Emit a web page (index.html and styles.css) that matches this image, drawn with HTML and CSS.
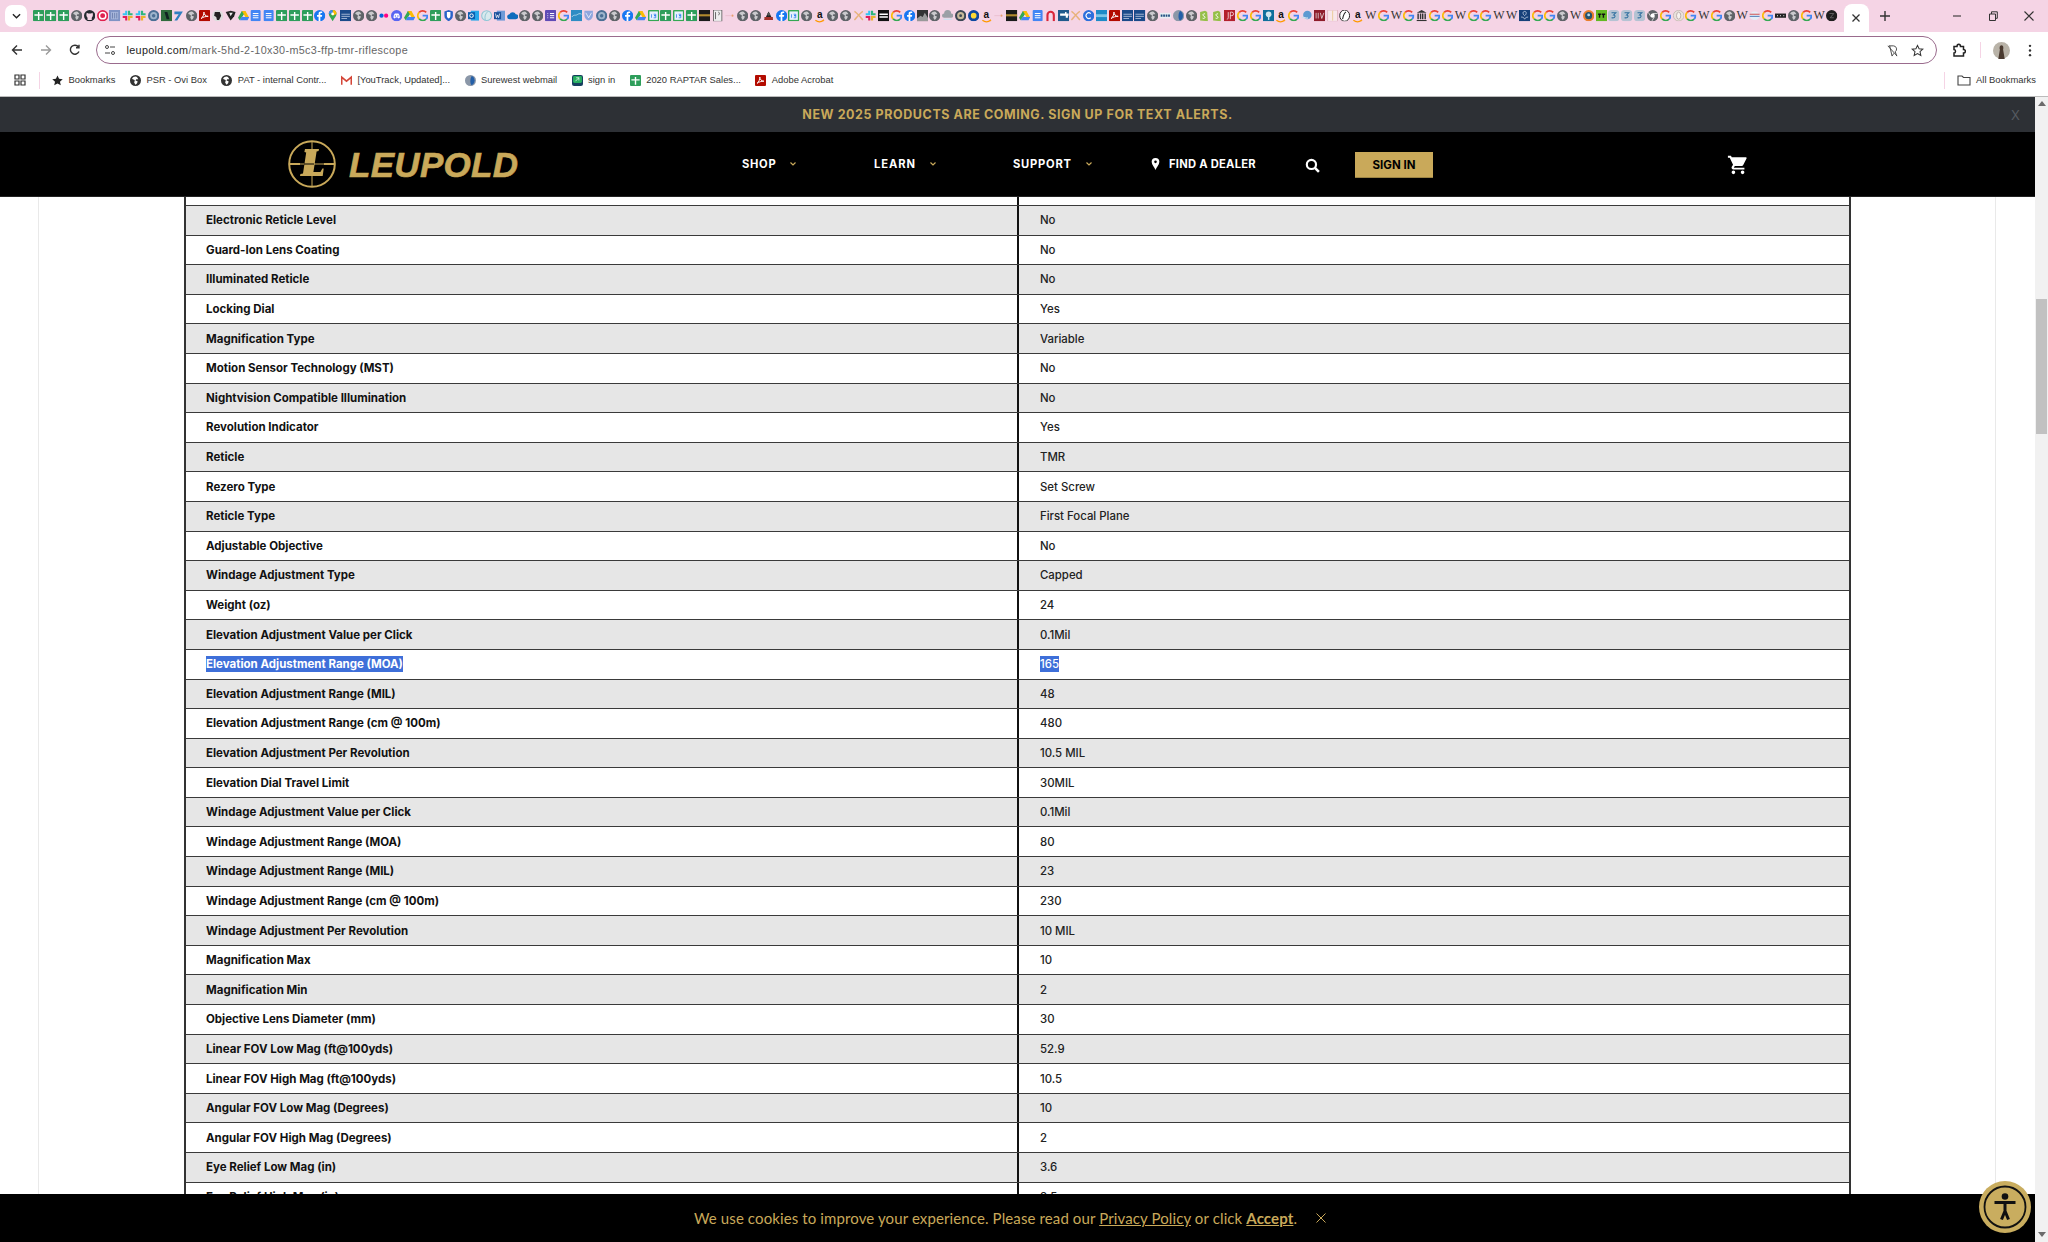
FILE: index.html
```html
<!DOCTYPE html>
<html lang="en">
<head>
<meta charset="utf-8">
<title>Leupold Mark 5HD 2-10x30</title>
<link rel="stylesheet" href="styles.css">
</head>
<body>
<svg class="defs" aria-hidden="true">
<symbol id="s" viewBox="0 0 16 16"><rect width="16" height="16" rx="1.5" fill="#2e9e5b"/><path d="M7 3h2v3h5v2H9v6H7V8H2V6h5z" fill="#fff"/></symbol>
<symbol id="g" viewBox="0 0 16 16"><circle cx="8" cy="8" r="8" fill="#5f6368"/><path d="M8 2C6 2 4 3 3 5c1 2 3 1 4 3l-1 3 2 3c2-1 3-3 3-5L8 8l1-2h3c-1-2-2-4-4-4z" fill="#c9c9cc"/></symbol>
<symbol id="gh" viewBox="0 0 16 16"><circle cx="8" cy="8" r="8" fill="#24292f"/><path d="M5 14v-3C3 9 3 6 4 4l2 1h4l2-1c1 2 1 5-1 7v3z" fill="#f5d4e5"/></symbol>
<symbol id="yt" viewBox="0 0 16 16"><circle cx="8" cy="8" r="8" fill="#e0224e"/><circle cx="8" cy="8" r="4.5" fill="none" stroke="#fff" stroke-width="2"/></symbol>
<symbol id="ms" viewBox="0 0 16 16"><rect width="16" height="16" fill="#7f93c4"/><path d="M3 3h10v10H3z" fill="#a9b8dc"/><path d="M5 4v8M8 4v8M11 4v8" stroke="#5c6f9f"/></symbol>
<symbol id="sl" viewBox="0 0 16 16"><path d="M6 1v5H1" fill="none" stroke="#36c5f0" stroke-width="3"/><path d="M15 6h-5V1" fill="none" stroke="#2eb67d" stroke-width="3"/><path d="M10 15v-5h5" fill="none" stroke="#ecb22e" stroke-width="3"/><path d="M1 10h5v5" fill="none" stroke="#e01e5a" stroke-width="3"/></symbol>
<symbol id="ro" viewBox="0 0 16 16"><circle cx="8" cy="8" r="8" fill="#4b6f95"/><circle cx="8" cy="8" r="5" fill="#9db4cc"/><circle cx="8" cy="8" r="2.5" fill="#4b6f95"/></symbol>
<symbol id="gd" viewBox="0 0 16 16"><rect width="16" height="16" fill="#2f6b3c"/><path d="M5 3h4l3 10H8z" fill="#122"/></symbol>
<symbol id="bs" viewBox="0 0 16 16"><path d="M2 2h12L6 15H2l6-9H2z" fill="#2f7fc1"/></symbol>
<symbol id="pdf" viewBox="0 0 16 16"><rect width="16" height="16" rx="1.5" fill="#b30b00"/><path d="M3 12c3-2 4-6 4-9 0 3 2 6 6 6-4 0-7 1-10 3z" fill="none" stroke="#fff" stroke-width="1.4"/></symbol>
<symbol id="dk" viewBox="0 0 16 16"><circle cx="8" cy="8" r="8" fill="#ddd"/><path d="M4 3h7l2 5-3 6H7l-1-4-3-2z" fill="#222"/></symbol>
<symbol id="sh" viewBox="0 0 16 16"><path d="M1 3l7-2 7 2-2 6-5 6-3-5z" fill="#222"/><path d="M6 4h5L8 9z" fill="#eee"/></symbol>
<symbol id="dr" viewBox="0 0 16 16"><path d="M5.5 1.5h5L8 6 5 11z" fill="#0f9d58"/><path d="M5.5 1.500L0 11l2.500 3.500L8 6z" fill="#34a853"/><path d="M10.500 1.500L16 11h-5L5.500 1.500z" fill="#fbbc04"/><path d="M2.500 14.500L5 10h11l-2.500 4.500z" fill="#4285f4"/></symbol>
<symbol id="do" viewBox="0 0 16 16"><rect x="1" width="14" height="16" rx="1.500" fill="#4285f4"/><path d="M4 5h8M4 8h8M4 11h8" stroke="#fff" stroke-width="1.400"/></symbol>
<symbol id="fb" viewBox="0 0 16 16"><circle cx="8" cy="8" r="8" fill="#1877f2"/><path d="M9 16V9.500h2.200l.4-2.500H9V5.500c0-.8.4-1.300 1.400-1.300h1.200V2.100C11 2 10.300 2 9.700 2 7.700 2 6.500 3.200 6.500 5.200V7H4.300v2.500h2.200V16z" fill="#fff"/></symbol>
<symbol id="mp" viewBox="0 0 16 16"><path d="M8 0a5.500 5.500 0 0 1 5.500 5.500C13.500 9 9.500 12 8 16 6.500 12 2.500 9 2.500 5.500A5.500 5.500 0 0 1 8 0z" fill="#34a853"/><path d="M8 0a5.500 5.500 0 0 1 5.500 5.500L8 8z" fill="#fbbc04"/><path d="M8 0a5.500 5.500 0 0 0-5.500 5.500L8 4z" fill="#4285f4"/><circle cx="8" cy="5.500" r="2" fill="#fff"/></symbol>
<symbol id="nv" viewBox="0 0 16 16"><rect width="16" height="16" fill="#1b4a8a"/><path d="M2 6h12M2 9h12M2 12h8" stroke="#d5e0ef"/></symbol>
<symbol id="dt" viewBox="0 0 16 16"><circle cx="5" cy="8" r="3" fill="#0063dc"/><circle cx="11.500" cy="8" r="3" fill="#ff0084"/></symbol>
<symbol id="dc" viewBox="0 0 16 16"><circle cx="8" cy="8" r="8" fill="#5865f2"/><path d="M3.500 11c0-3 1-5 2-6h5c1 1 2 3 2 6l-2 1-1-1.500h-3L5.500 12z" fill="#fff"/><circle cx="6.200" cy="8.500" r="1" fill="#5865f2"/><circle cx="9.800" cy="8.500" r="1" fill="#5865f2"/></symbol>
<symbol id="G" viewBox="0 0 16 16"><path d="M13 3.500A7 7 0 0 0 3 3.300" fill="none" stroke="#ea4335" stroke-width="2.600"/><path d="M3 3.300a7 7 0 0 0 0 9.400" fill="none" stroke="#fbbc05" stroke-width="2.600"/><path d="M3 12.700a7 7 0 0 0 9.800.2" fill="none" stroke="#34a853" stroke-width="2.600"/><path d="M12.800 12.900A7 7 0 0 0 15 8H8" fill="none" stroke="#4285f4" stroke-width="2.600"/></symbol>
<symbol id="sw" viewBox="0 0 16 16"><path d="M2 2l6-2 6 2v6c0 4-3 6-6 8-3-2-6-4-6-8z" fill="#2a62c9"/><path d="M5.500 3h5v5c0 2-1 3-2.500 4-1.500-1-2.500-2-2.500-4z" fill="#fff"/></symbol>
<symbol id="ol" viewBox="0 0 16 16"><rect x="4" y="1" width="12" height="14" fill="#28a8ea"/><rect y="3" width="10" height="10" fill="#0a5fb0"/><circle cx="5" cy="8" r="2.500" fill="none" stroke="#fff" stroke-width="1.400"/></symbol>
<symbol id="lb" viewBox="0 0 16 16"><circle cx="8" cy="8" r="7" fill="#d8e9ee" stroke="#8fc6d6" stroke-width="1.500"/><path d="M10 2C6 5 5 9 6 14" stroke="#77b7c9" fill="none"/></symbol>
<symbol id="wd" viewBox="0 0 16 16"><rect x="4" y="1" width="12" height="14" fill="#6f9ad8"/><rect y="3" width="10" height="10" fill="#1b4f9c"/><path d="M2 5l1.500 6L5 7l1.500 4L8 5" fill="none" stroke="#fff"/></symbol>
<symbol id="cl" viewBox="0 0 16 16"><path d="M4 13a3.500 3.500 0 0 1-.5-7A5 5 0 0 1 12.500 6a3.500 3.500 0 0 1 0 7z" fill="#0f6cbd"/></symbol>
<symbol id="fm" viewBox="0 0 16 16"><rect width="16" height="16" rx="1.500" fill="#5f4bb6"/><path d="M7 5h6M7 8h6M7 11h6M3.500 5h1M3.500 8h1M3.500 11h1" stroke="#fff" stroke-width="1.400"/></symbol>
<symbol id="bm" viewBox="0 0 16 16"><rect width="16" height="16" fill="#2d8cc4"/><path d="M1 10c3-4 5-2 7-3s4-3 7-1" stroke="#d7ecf6" fill="none"/></symbol>
<symbol id="sb" viewBox="0 0 16 16"><path d="M2 1h12v7c0 3-3 6-6 7-3-1-6-4-6-7z" fill="#8fa6de"/><path d="M4 4l4 7 4-7" stroke="#fff" fill="none"/></symbol>
<symbol id="cal" viewBox="0 0 16 16"><rect width="16" height="16" rx="1.500" fill="#34a853"/><rect x="2" y="2" width="12" height="12" fill="#e8f0fe"/><path d="M5 6v5M8 6h3v2H8.500h2.500v3H8" stroke="#1a73e8" fill="none"/></symbol>
<symbol id="bgd" viewBox="0 0 16 16"><rect width="16" height="16" fill="#1a1a1a"/><rect y="6" width="16" height="3" fill="#b08a2e"/></symbol>
<symbol id="dw" viewBox="0 0 16 16"><rect x="2" width="12" height="16" fill="#eee" stroke="#444"/><path d="M5 3v10M9 3c2 0 2 4 0 4" stroke="#333" fill="none"/></symbol>
<symbol id="ti" viewBox="0 0 16 16"><path d="M2 8h8" stroke="#e6b8c8"/><circle cx="12" cy="8" r="1.500" fill="#e8a070"/></symbol>
<symbol id="rb" viewBox="0 0 16 16"><path d="M2 14l6-12 6 12z" fill="#222"/><path d="M2 10h12v4H2z" fill="#a3302a"/><circle cx="8" cy="6" r="2" fill="#555"/></symbol>
<symbol id="xo" viewBox="0 0 16 16"><path d="M2 2c4 2 8 8 12 12M14 2C10 4 6 10 2 14" stroke="#e7b27a" stroke-width="2" fill="none"/></symbol>
<symbol id="eq" viewBox="0 0 16 16"><rect width="16" height="16" fill="#111"/><path d="M2 5h12v2H2zM2 9h12v2H2z" fill="#fff"/></symbol>
<symbol id="di" viewBox="0 0 16 16"><rect width="16" height="16" fill="#333"/><path d="M0 12l5-4 3 2 3-6 5 8v4H0z" fill="#999"/></symbol>
<symbol id="cg" viewBox="0 0 16 16"><path d="M3 11a3 3 0 0 1 0-6 5 5 0 0 1 10 0 3 3 0 0 1 0 6z" fill="#9aa0a6"/><path d="M2 13h12" stroke="#cfe0ee" stroke-width="2"/></symbol>
<symbol id="se" viewBox="0 0 16 16"><circle cx="8" cy="8" r="8" fill="#3b4654"/><circle cx="8" cy="8" r="5" fill="#c7b999"/><circle cx="8" cy="8" r="2" fill="#3b4654"/></symbol>
<symbol id="yb" viewBox="0 0 16 16"><circle cx="8" cy="8" r="8" fill="#0d47a1"/><circle cx="8" cy="8" r="4" fill="#fdd835"/></symbol>
<symbol id="ar" viewBox="0 0 16 16"><path d="M2 16V7a6 6 0 0 1 12 0v9h-3V7a3 3 0 0 0-6 0v9z" fill="#d9263a"/></symbol>
<symbol id="fa" viewBox="0 0 16 16"><rect width="16" height="16" fill="#1f5a8c"/><path d="M3 5h7V3h2v2h3v3H3zM11 8h3v3h-3z" fill="#fff"/></symbol>
<symbol id="bc" viewBox="0 0 16 16"><circle cx="8" cy="8" r="8" fill="#2c6fdc"/><path d="M11 5a4 4 0 1 0 0 6" fill="none" stroke="#fff" stroke-width="1.500"/></symbol>
<symbol id="ac" viewBox="0 0 16 16"><rect width="16" height="16" fill="#1d8ac7"/><rect y="6" width="16" height="4" fill="#7cc4e6"/></symbol>
<symbol id="cs" viewBox="0 0 16 16"><rect y="4" width="16" height="8" fill="#e9edf2"/><path d="M1 8h14" stroke="#1f4f80" stroke-width="3" stroke-dasharray="2.500 1"/></symbol>
<symbol id="br" viewBox="0 0 16 16"><circle cx="8" cy="8" r="8" fill="#8b97a8"/><path d="M10 1a8 8 0 0 1 0 14C7 13 7 5 10 1z" fill="#245fa8"/></symbol>
<symbol id="sp" viewBox="0 0 16 16"><path d="M3 3l7-2 3 2 1 13-11-1z" fill="#95bf47"/><path d="M10 5.500C8 5 7 6 7 7c0 2 3 1.500 3 3.500 0 1-2 2-3.500 1" fill="none" stroke="#fff" stroke-width="1.300"/></symbol>
<symbol id="jp" viewBox="0 0 16 16"><rect width="16" height="16" fill="#b3202c"/><path d="M6 3v8c0 1.500-1 2-2 2M9 13V3h2a2.500 2.500 0 0 1 0 5H9" fill="none" stroke="#fff"/></symbol>
<symbol id="bt" viewBox="0 0 16 16"><rect width="16" height="16" fill="#0f6f9c"/><circle cx="8" cy="6" r="4" fill="#cfe6ef"/><rect x="7" y="9" width="2" height="5" fill="#cfe6ef"/></symbol>
<symbol id="bb" viewBox="0 0 16 16"><circle cx="9" cy="7" r="6" fill="#5d9ad1"/><path d="M1 11c3-2 5 2 9 0" stroke="#cfe0ee" stroke-width="2" fill="none"/></symbol>
<symbol id="bv" viewBox="0 0 16 16"><rect width="16" height="16" fill="#8e1c2a"/><path d="M3 4v8M6 4v8M9 4l2 8 3-8" stroke="#eee" fill="none"/></symbol>
<symbol id="pk" viewBox="0 0 16 16"><rect x="1" width="14" height="16" fill="#f8e6ea" stroke="#dba8b6"/><path d="M8 1v14" stroke="#e6c27a"/></symbol>
<symbol id="dv" viewBox="0 0 16 16"><ellipse cx="8" cy="8" rx="7" ry="8" fill="#fff" stroke="#222" stroke-width="1.400"/><path d="M10 3C7 4 6 9 5 13" stroke="#222" stroke-width="1.500" fill="none"/></symbol>
<symbol id="mu" viewBox="0 0 16 16"><path d="M8 0l7 4H1zM2 5h2v8H2zM5.500 5h2v8h-2zM8.500 5h2v8h-2zM12 5h2v8h-2zM1 14h14v2H1z" fill="#333"/></symbol>
<symbol id="nm" viewBox="0 0 16 16"><rect width="16" height="16" fill="#16417a"/><path d="M8 2c3 0 3 4 0 6-3-2-3-6 0-6zM3 10c3 0 4 1 5 3 1-2 2-3 5-3" stroke="#dbe5f2" fill="none"/></symbol>
<symbol id="oc" viewBox="0 0 16 16"><circle cx="8" cy="8" r="8" fill="#e97f2e"/><circle cx="8" cy="8" r="5" fill="#23536e"/><circle cx="8" cy="7" r="2" fill="#bde"/></symbol>
<symbol id="rt" viewBox="0 0 16 16"><rect width="16" height="16" fill="#63b923"/><path d="M3 5h4v2H6v4H4V7H3zM8 5h5v2h-1.500v4h-2V7H8z" fill="#111"/></symbol>
<symbol id="g3" viewBox="0 0 16 16"><rect width="16" height="16" rx="5" fill="#b5c3d3"/><path d="M5 4h6L8 7c3 0 3 5-3 4" fill="none" stroke="#2f6f9f" stroke-width="1.500"/></symbol>
<symbol id="ch" viewBox="0 0 16 16"><circle cx="8" cy="8" r="8" fill="#5f6368"/><circle cx="8" cy="8" r="3" fill="#fff"/><path d="M8 5h7M5.500 9.500L2 3.500M10.500 9.500L7 15.500" stroke="#fff"/></symbol>
<symbol id="ov" viewBox="0 0 16 16"><circle cx="8" cy="8" r="7.500" fill="#e9e1dc" stroke="#bdb0a8"/><ellipse cx="8" cy="8" rx="3" ry="5" fill="#f7f3ef" stroke="#a99"/></symbol>
<symbol id="st" viewBox="0 0 16 16"><ellipse cx="8" cy="8" rx="7" ry="6" fill="#e6eef8"/><path d="M1 6h14" stroke="#c33" stroke-width="1.200"/><path d="M1 9h14" stroke="#36a" stroke-width="1.200"/></symbol>
<symbol id="bl" viewBox="0 0 16 16"><rect y="5" width="16" height="6" fill="#222"/><path d="M3 8h1M7.500 8h1M12 8h1" stroke="#fff" stroke-width="2"/></symbol>
<symbol id="dz" viewBox="0 0 16 16"><circle cx="8" cy="8" r="8" fill="#1e1e1e"/><path d="M5 5h6l-5 6h5" stroke="#777" fill="none"/></symbol>
<symbol id="ams" viewBox="0 0 16 16"><path d="M2 12c4 3 8 3 12 0" fill="none" stroke="#f90" stroke-width="1.800"/><path d="M13.500 10.500l1 2-2 .5" fill="none" stroke="#f90"/></symbol>
</svg>

<header class="tabstrip">
  <button class="tablist" aria-label="Search tabs"><svg viewBox="0 0 10 6"><path d="M1 1l4 4 4-4" fill="none" stroke="#222" stroke-width="1.500"/></svg></button>
  <div class="favs">
    <svg><use href="#s"/></svg><svg><use href="#s"/></svg><svg><use href="#s"/></svg><svg><use href="#g"/></svg><svg><use href="#gh"/></svg><svg><use href="#yt"/></svg><svg><use href="#ms"/></svg><svg><use href="#sl"/></svg><svg><use href="#sl"/></svg><svg><use href="#ro"/></svg>
    <svg><use href="#gd"/></svg><svg><use href="#bs"/></svg><svg><use href="#g"/></svg><svg><use href="#pdf"/></svg><svg><use href="#dk"/></svg><svg><use href="#sh"/></svg><svg><use href="#dr"/></svg><svg><use href="#do"/></svg><svg><use href="#do"/></svg><svg><use href="#s"/></svg>
    <svg><use href="#s"/></svg><svg><use href="#s"/></svg><svg><use href="#fb"/></svg><svg><use href="#mp"/></svg><svg><use href="#nv"/></svg><svg><use href="#g"/></svg><svg><use href="#g"/></svg><svg><use href="#dt"/></svg><svg><use href="#dc"/></svg><svg><use href="#dr"/></svg>
    <svg><use href="#G"/></svg><svg><use href="#s"/></svg><svg><use href="#sw"/></svg><svg><use href="#g"/></svg><svg><use href="#ol"/></svg><svg><use href="#lb"/></svg><svg><use href="#wd"/></svg><svg><use href="#cl"/></svg><svg><use href="#g"/></svg><svg><use href="#g"/></svg>
    <svg><use href="#fm"/></svg><svg><use href="#G"/></svg><svg><use href="#bm"/></svg><svg><use href="#sb"/></svg><svg><use href="#ro"/></svg><svg><use href="#g"/></svg><svg><use href="#fb"/></svg><svg><use href="#dr"/></svg><svg><use href="#cal"/></svg><svg><use href="#s"/></svg>
    <svg><use href="#cal"/></svg><svg><use href="#s"/></svg>
    <svg><use href="#bgd"/></svg><svg><use href="#dw"/></svg><svg><use href="#ti"/></svg><svg><use href="#g"/></svg><svg><use href="#g"/></svg><svg><use href="#rb"/></svg><svg><use href="#fb"/></svg><svg><use href="#cal"/></svg><svg><use href="#g"/></svg><span class="amz">a<svg><use href="#ams"/></svg></span>
    <svg><use href="#g"/></svg><svg><use href="#g"/></svg><svg><use href="#xo"/></svg><svg><use href="#sl"/></svg><svg><use href="#eq"/></svg><svg><use href="#G"/></svg><svg><use href="#fb"/></svg><svg><use href="#di"/></svg><svg><use href="#g"/></svg><svg><use href="#cg"/></svg>
    <svg><use href="#se"/></svg><svg><use href="#yb"/></svg><span class="amz">a<svg><use href="#ams"/></svg></span><svg><use href="#ti"/></svg><svg><use href="#bgd"/></svg><svg><use href="#dr"/></svg><svg><use href="#do"/></svg><svg><use href="#ar"/></svg><svg><use href="#fa"/></svg><svg><use href="#xo"/></svg>
    <svg><use href="#bc"/></svg><svg><use href="#ac"/></svg><svg><use href="#pdf"/></svg><svg><use href="#nv"/></svg><svg><use href="#nv"/></svg><svg><use href="#g"/></svg><svg><use href="#cs"/></svg><svg><use href="#br"/></svg><svg><use href="#g"/></svg><svg><use href="#sp"/></svg>
    <svg><use href="#sp"/></svg><svg><use href="#jp"/></svg><svg><use href="#G"/></svg><svg><use href="#G"/></svg><svg><use href="#bt"/></svg><span class="amz">a<svg><use href="#ams"/></svg></span><svg><use href="#G"/></svg><svg><use href="#bb"/></svg><svg><use href="#bv"/></svg><svg><use href="#pk"/></svg>
    <svg><use href="#dv"/></svg><span class="amz">a<svg><use href="#ams"/></svg></span><span class="wik">W</span><svg><use href="#G"/></svg><span class="wik">W</span><svg><use href="#G"/></svg><svg><use href="#mu"/></svg><svg><use href="#G"/></svg><svg><use href="#G"/></svg><span class="wik">W</span>
    <svg><use href="#G"/></svg><svg><use href="#G"/></svg><span class="wik">W</span><span class="wik">W</span><svg><use href="#nm"/></svg><svg><use href="#G"/></svg><svg><use href="#G"/></svg><svg><use href="#g"/></svg><span class="wik">W</span><svg><use href="#oc"/></svg>
    <svg><use href="#rt"/></svg><svg><use href="#g3"/></svg><svg><use href="#g3"/></svg><svg><use href="#g3"/></svg><svg><use href="#ch"/></svg><svg><use href="#G"/></svg><svg><use href="#ov"/></svg><svg><use href="#G"/></svg><span class="wik">W</span><svg><use href="#G"/></svg>
    <svg><use href="#g"/></svg><span class="wik">W</span><svg><use href="#st"/></svg><svg><use href="#G"/></svg><svg><use href="#bl"/></svg><svg><use href="#g"/></svg><svg><use href="#G"/></svg><span class="wik">W</span><svg><use href="#dz"/></svg>
  </div>
  <div class="activetab"><svg class="ic10" viewBox="0 0 10 10"><path d="M1.500 1.500l7 7M8.500 1.500l-7 7" stroke="#333" stroke-width="1.300"/></svg></div>
  <svg class="newtab" viewBox="0 0 10 10"><path d="M5 0v10M0 5h10" stroke="#333" stroke-width="1.400"/></svg>
  <div class="winctl">
    <svg class="ic10" viewBox="0 0 10 10"><path d="M1 5h8" stroke="#333" stroke-width="1.100"/></svg>
    <svg class="ic10" viewBox="0 0 10 10"><path d="M1.500 3h6v6.500h-6zM3.500 3V.8h5.800v6.500H7.500" fill="none" stroke="#333"/></svg>
    <svg class="ic10" viewBox="0 0 10 10"><path d="M.5.500l9 9M9.500.500l-9 9" stroke="#333" stroke-width="1.100"/></svg>
  </div>
</header>

<div class="toolbar">
  <div class="navbtns">
    <svg viewBox="0 0 12 12"><path d="M11 6H1.500M6 1.500L1.500 6 6 10.500" fill="none" stroke="#333" stroke-width="1.400"/></svg>
    <svg viewBox="0 0 12 12"><path d="M1 6h9.500M6 1.500L10.500 6 6 10.500" fill="none" stroke="#9a9a9a" stroke-width="1.400"/></svg>
    <svg viewBox="0 0 12 12"><path d="M10 7.500A4.500 4.500 0 1 1 9.500 3M10 .8v3H7" fill="none" stroke="#333" stroke-width="1.400"/></svg>
  </div>
  <div class="omnibox">
    <svg class="tune" viewBox="0 0 12 12"><circle cx="3" cy="3" r="1.500" fill="none" stroke="#444"/><path d="M6 3h5M1 9h5" stroke="#444"/><circle cx="9" cy="9" r="1.500" fill="none" stroke="#444"/></svg>
    <span class="url"><span class="host">leupold.com</span>/mark-5hd-2-10x30-m5c3-ffp-tmr-riflescope</span>
    <svg class="omni-ic" viewBox="0 0 14 14"><path d="M3 2h5a3.500 3.500 0 0 1 2 6.300L11.500 13M4 2l2.500 11 2-3M2 2l10 11" fill="none" stroke="#444"/></svg>
    <svg class="omni-ic" viewBox="0 0 14 14"><path d="M7 1.500l1.700 3.700 4 .4-3 2.700.9 4L7 10.300l-3.600 2 .9-4-3-2.700 4-.4z" fill="none" stroke="#333" stroke-width="1.100"/></svg>
  </div>
  <svg class="tool-ext" viewBox="0 0 14 14"><path d="M2 3.500h3c0-3 3.500-3 3.500 0h3v3c2.500 0 2.500 3.500 0 3.500v3H2v-3c2 0 2-3.500 0-3.500z" fill="none" stroke="#222" stroke-width="1.500"/></svg>
  <i class="vsep"></i>
  <svg class="avatar" viewBox="0 0 16 16"><circle cx="8" cy="8" r="8" fill="#b9b3a8"/><path d="M8 3c2 0 2 3 1.500 4L11 16H5l1.500-9C6 6 6 3 8 3z" fill="#4a3a30"/></svg>
  <svg class="kebab" viewBox="0 0 4 14"><circle cx="2" cy="2" r="1.300" fill="#333"/><circle cx="2" cy="7" r="1.300" fill="#333"/><circle cx="2" cy="12" r="1.300" fill="#333"/></svg>
</div>

<nav class="bookmarks">
  <svg class="apps" viewBox="0 0 12 12"><path d="M1 1h4v4H1zM7 1h4v4H7zM1 7h4v4H1zM7 7h4v4H7z" fill="none" stroke="#333" stroke-width="1.200"/></svg>
  <i class="bsep"></i>
  <a class="bm"><svg viewBox="0 0 12 12"><path d="M6 .5l1.700 3.700 4 .4-3 2.700.9 4L6 9.300l-3.600 2 .9-4-3-2.700 4-.4z" fill="#222"/></svg>Bookmarks</a>
  <a class="bm"><svg viewBox="0 0 16 16"><circle cx="8" cy="8" r="8" fill="#333"/><path d="M8 2C6 2 4 3 3 5c1 2 3 1 4 3l-1 3 2 3c2-1 3-3 3-5L8 8l1-2h3c-1-2-2-4-4-4z" fill="#fff"/></svg>PSR - Ovi Box</a>
  <a class="bm"><svg viewBox="0 0 16 16"><circle cx="8" cy="8" r="8" fill="#333"/><path d="M8 2C6 2 4 3 3 5c1 2 3 1 4 3l-1 3 2 3c2-1 3-3 3-5L8 8l1-2h3c-1-2-2-4-4-4z" fill="#fff"/></svg>PAT - internal Contr...</a>
  <a class="bm"><svg viewBox="0 0 16 16"><path d="M1 14V3l7 6 7-6v11" fill="none" stroke="#d44638" stroke-width="2.400"/></svg>[YouTrack, Updated]...</a>
  <a class="bm"><svg><use href="#br"/></svg>Surewest webmail</a>
  <a class="bm"><svg viewBox="0 0 16 16"><rect width="16" height="16" rx="3" fill="#173f5f"/><rect x="1.500" y="1.500" width="13" height="10" rx="2" fill="#27ae60"/><path d="M5 9l5-5M6 4h4v4" stroke="#fff" fill="none"/></svg>sign in</a>
  <a class="bm"><svg><use href="#s"/></svg>2020 RAPTAR Sales...</a>
  <a class="bm"><svg><use href="#pdf"/></svg>Adobe Acrobat</a>
  <div class="allbm">
    <i class="bsep"></i>
    <a class="bm"><svg viewBox="0 0 14 12"><path d="M1 2h4l1.500 1.500H13V11H1z" fill="none" stroke="#444" stroke-width="1.100"/></svg>All Bookmarks</a>
  </div>
</nav>

<div class="viewport">
  <main class="page">
    <div class="promo">
      <span class="promo-text">NEW 2025 PRODUCTS ARE COMING. SIGN UP FOR TEXT ALERTS.</span>
      <span class="promo-x">X</span>
    </div>
    <div class="sitenav">
      <a class="logo">
        <svg viewBox="0 0 48 48"><circle cx="24" cy="24" r="22.800" fill="none" stroke="#c9a95a" stroke-width="2"/><path d="M24 1v46M1 24h46" stroke="#c9a95a" stroke-width="1"/><path d="M1 24h11M36 24h11" stroke="#c9a95a" stroke-width="2"/><path d="M17 9h14l-.4 2-2 .6-3.200 20.400h7l2-3.500h1.300l-1 7.500H12l.4-2 2.600-.6 3.200-20.800-1.800-.6z" fill="#c9a95a"/><path d="M16 24h10" stroke="#000"/></svg>
        <span class="wordmark">LEUPOLD</span>
      </a>
      <a class="lnk shop">SHOP<svg class="chev" viewBox="0 0 6 4"><path d="M.5.500L3 3 5.500.500" fill="none" stroke="#c9a95a" stroke-width="1.200"/></svg></a>
      <a class="lnk learn">LEARN<svg class="chev" viewBox="0 0 6 4"><path d="M.5.500L3 3 5.500.500" fill="none" stroke="#c9a95a" stroke-width="1.200"/></svg></a>
      <a class="lnk support">SUPPORT<svg class="chev" viewBox="0 0 6 4"><path d="M.5.500L3 3 5.500.500" fill="none" stroke="#c9a95a" stroke-width="1.200"/></svg></a>
      <a class="lnk dealer"><svg class="pin" viewBox="0 0 10 14"><path d="M5 0a4.500 4.500 0 0 1 4.500 4.500C9.500 8 6 11 5 14 4 11 .5 8 .5 4.500A4.500 4.500 0 0 1 5 0z" fill="#fff"/><circle cx="5" cy="4.500" r="1.500" fill="#000"/></svg>FIND A DEALER</a>
      <svg class="search" viewBox="0 0 14 14"><circle cx="6" cy="6" r="4.300" fill="none" stroke="#fff" stroke-width="2"/><path d="M9 9l4 4" stroke="#fff" stroke-width="2.400"/></svg>
      <a class="signin">SIGN IN</a>
      <svg class="cart" viewBox="0 0 24 24"><path d="M7 18a2 2 0 1 0 0 4 2 2 0 0 0 0-4zM1 2v2h2l3.600 7.600-1.400 2.400c-.7 1.300.3 3 1.800 3h12v-2H7.400l1.100-2h7.500c.7 0 1.400-.4 1.700-1L21.300 5c.4-.7-.1-1.500-.9-1.500H5.200L4.300 2zM17 18a2 2 0 1 0 0 4 2 2 0 0 0 0-4z" fill="#fff"/></svg>
    </div>
    <div class="content">
      <div class="column">
        <div class="specs">
          <div class="row stub"><span class="k"></span><span class="v"></span></div>
          <div class="row"><span class="k">Electronic Reticle Level</span><span class="v">No</span></div>
          <div class="row"><span class="k">Guard-Ion Lens Coating</span><span class="v">No</span></div>
          <div class="row"><span class="k">Illuminated Reticle</span><span class="v">No</span></div>
          <div class="row"><span class="k">Locking Dial</span><span class="v">Yes</span></div>
          <div class="row"><span class="k">Magnification Type</span><span class="v">Variable</span></div>
          <div class="row"><span class="k">Motion Sensor Technology (MST)</span><span class="v">No</span></div>
          <div class="row"><span class="k">Nightvision Compatible Illumination</span><span class="v">No</span></div>
          <div class="row"><span class="k">Revolution Indicator</span><span class="v">Yes</span></div>
          <div class="row"><span class="k">Reticle</span><span class="v">TMR</span></div>
          <div class="row"><span class="k">Rezero Type</span><span class="v">Set Screw</span></div>
          <div class="row"><span class="k">Reticle Type</span><span class="v">First Focal Plane</span></div>
          <div class="row"><span class="k">Adjustable Objective</span><span class="v">No</span></div>
          <div class="row"><span class="k">Windage Adjustment Type</span><span class="v">Capped</span></div>
          <div class="row"><span class="k">Weight (oz)</span><span class="v">24</span></div>
          <div class="row"><span class="k">Elevation Adjustment Value per Click</span><span class="v">0.1Mil</span></div>
          <div class="row"><span class="k"><mark>Elevation Adjustment Range (MOA)</mark></span><span class="v"><mark>165</mark></span></div>
          <div class="row"><span class="k">Elevation Adjustment Range (MIL)</span><span class="v">48</span></div>
          <div class="row"><span class="k">Elevation Adjustment Range (cm @ 100m)</span><span class="v">480</span></div>
          <div class="row"><span class="k">Elevation Adjustment Per Revolution</span><span class="v">10.5 MIL</span></div>
          <div class="row"><span class="k">Elevation Dial Travel Limit</span><span class="v">30MIL</span></div>
          <div class="row"><span class="k">Windage Adjustment Value per Click</span><span class="v">0.1Mil</span></div>
          <div class="row"><span class="k">Windage Adjustment Range (MOA)</span><span class="v">80</span></div>
          <div class="row"><span class="k">Windage Adjustment Range (MIL)</span><span class="v">23</span></div>
          <div class="row"><span class="k">Windage Adjustment Range (cm @ 100m)</span><span class="v">230</span></div>
          <div class="row"><span class="k">Windage Adjustment Per Revolution</span><span class="v">10 MIL</span></div>
          <div class="row"><span class="k">Magnification Max</span><span class="v">10</span></div>
          <div class="row"><span class="k">Magnification Min</span><span class="v">2</span></div>
          <div class="row"><span class="k">Objective Lens Diameter (mm)</span><span class="v">30</span></div>
          <div class="row"><span class="k">Linear FOV Low Mag (ft@100yds)</span><span class="v">52.9</span></div>
          <div class="row"><span class="k">Linear FOV High Mag (ft@100yds)</span><span class="v">10.5</span></div>
          <div class="row"><span class="k">Angular FOV Low Mag (Degrees)</span><span class="v">10</span></div>
          <div class="row"><span class="k">Angular FOV High Mag (Degrees)</span><span class="v">2</span></div>
          <div class="row"><span class="k">Eye Relief Low Mag (in)</span><span class="v">3.6</span></div>
          <div class="row"><span class="k">Eye Relief High Mag (in)</span><span class="v">3.5</span></div>
        </div>
      </div>
    </div>
    <div class="cookie">
      <span class="cookie-text">We use cookies to improve your experience. Please read our <u>Privacy Policy</u> or click <u class="accept">Accept</u>.</span>
      <span class="cookie-x"><svg viewBox="0 0 10 10"><path d="M.5.500l9 9M9.500.500l-9 9" stroke="#c9a95a"/></svg></span>
    </div>
    <button class="a11y" aria-label="Accessibility"><svg viewBox="0 0 52 52"><circle cx="26" cy="26" r="26" fill="#c9ad5f"/><circle cx="26" cy="26" r="20.500" fill="none" stroke="#111" stroke-width="1.800"/><circle cx="26" cy="15.500" r="3.300" fill="#111"/><path d="M15.500 21.500h21M26 21.500v9M26 30l-3.500 8.500M26 30l3.500 8.500" fill="none" stroke="#111" stroke-width="3" /></svg></button>
  </main>
  <aside class="scrollbar">
    <svg viewBox="0 0 8 5"><path d="M4 0l4 5H0z" fill="#6b6b6b"/></svg>
    <div class="track"><div class="thumb"></div></div>
    <svg viewBox="0 0 8 5"><path d="M4 5L8 0H0z" fill="#6b6b6b"/></svg>
  </aside>
</div>
</body>
</html>
```
FILE: styles.css
```css
* { box-sizing: border-box; }
html, body { margin: 0; height: 100%; }
body { height: 1242px; overflow: hidden; display: flex; flex-direction: column; background: #fff; font-family: "Inter", "Liberation Sans", sans-serif; color: #111; }
.defs { display: none; }
a { color: inherit; text-decoration: none; }
button { border: 0; padding: 0; background: none; }

/* browser chrome */
.tabstrip { height: 32px; background: #f5d4e5; display: flex; align-items: center; flex: none; position: relative; }
.tablist { width: 22px; height: 22px; margin-left: 5px; border-radius: 7px; background: #fff; display: flex; align-items: center; justify-content: center; flex: none; }
.tablist svg { width: 9px; height: 6px; }
.favs { display: flex; align-items: center; margin-left: 5.500px; width: 1811px; flex: none; }
.favs > svg, .favs > span { width: 11.300px; height: 11.300px; margin-right: 1.520px; flex: none; }
.wik { font: 12px/11px "Liberation Serif", serif; color: #333; text-align: center; }
.amz { font: bold 10px/9px "Liberation Sans", sans-serif; color: #111; text-align: center; position: relative; display: block; }
.amz svg { position: absolute; left: 0; top: 2px; width: 11px; height: 11px; }
.activetab { width: 25px; height: 28px; margin: 4px 0 0 0; background: #fff; border-radius: 8px 8px 0 0; display: flex; align-items: center; justify-content: center; flex: none; }
.ic10 { width: 10px; height: 10px; }
.newtab { width: 10px; height: 10px; margin-left: 11px; flex: none; }
.winctl { margin-left: auto; display: flex; gap: 26px; padding-right: 14px; }
.toolbar { height: 32px; padding-top: 4px; flex: none; display: flex; align-items: center; background: #fff; }
.navbtns { display: flex; gap: 17px; padding-left: 11px; width: 96px; flex: none; }
.navbtns svg { width: 12px; height: 12px; }
.omnibox { width: 1841px; height: 28px; flex: none; border: 1.500px solid #9a6b8d; border-radius: 14px; display: flex; align-items: center; padding: 0 12px 0 7px; }
.tune { width: 12px; height: 12px; margin-right: 10.500px; flex: none; }
.url { font: 10.800px/1 "Liberation Sans", sans-serif; color: #666; flex: 1; letter-spacing: 0.340px; }
.host { color: #222; }
.omni-ic { width: 13px; height: 13px; margin-left: 12px; flex: none; }
.tool-ext { width: 14px; height: 14px; margin-left: 15px; flex: none; }
.vsep { width: 1px; height: 16px; background: #f5d4e5; margin-left: 14px; flex: none; }
.avatar { width: 17px; height: 17px; margin-left: 12px; flex: none; }
.kebab { width: 4px; height: 13px; margin-left: 18px; flex: none; }
.bookmarks { height: 32px; flex: none; display: flex; align-items: center; background: #fff; padding-left: 14px; font: 9.400px/1 "Liberation Sans", sans-serif; color: #333; }
.apps { width: 12px; height: 12px; flex: none; }
.bsep { width: 1px; height: 17px; background: #f5d4e5; margin-left: 13px; flex: none; }
.bm { display: flex; align-items: center; gap: 5.500px; margin-left: 14.500px; white-space: nowrap; }
.bsep + .bm { margin-left: 12px; }
.bm svg { width: 11px; height: 11px; flex: none; }
.allbm { margin-left: auto; display: flex; align-items: center; padding-right: 12px; }
.allbm .bsep { margin: 0; }
.allbm .bm svg { width: 14px; height: 12px; }

/* site */
.viewport { flex: 1; min-height: 0; display: flex; border-top: 1px solid #bbb; }
.page { flex: 1; min-width: 0; display: flex; flex-direction: column; position: relative; overflow: hidden; }
.promo { height: 35px; background: #2d3035; color: #c9a95a; display: flex; align-items: center; justify-content: center; position: relative; flex: none; }
.promo-text { font-weight: 700; font-size: 12.500px; letter-spacing: .57px; }
.promo-x { position: absolute; left: 2011px; top: 10px; color: #555a60; font-size: 13px; }
.sitenav { height: 65px; background: #000; display: flex; align-items: center; flex: none; border-bottom: 1px solid #222; color: #fff; }
.logo { display: flex; align-items: center; margin-left: 288px; width: 454px; flex: none; }
.logo svg { width: 48px; height: 48px; flex: none; }
.wordmark { font: italic 700 35px/1 "Liberation Sans", sans-serif; color: #c9a95a; margin-left: 13px; letter-spacing: .3px; -webkit-text-stroke: .6px #c9a95a; }
.lnk { font-weight: 700; font-size: 11.200px; letter-spacing: .7px; display: flex; align-items: center; flex: none; }
.chev { width: 6px; height: 4px; margin-left: 14px; }
.shop { width: 132px; }
.learn { width: 139px; letter-spacing: .95px; }
.support { width: 138px; letter-spacing: .75px; }
.dealer { width: 154px; gap: 9px; letter-spacing: .25px; }
.pin { width: 9px; height: 12px; flex: none; }
.search { width: 15px; height: 15px; flex: none; margin: 2px 35px 0 0; }
.signin { width: 78px; height: 26px; margin-top: 2px; background: #c9a95a; color: #000; font-weight: 700; font-size: 11.500px; display: flex; align-items: center; justify-content: center; flex: none; border-bottom: 1px solid #9c8444; }
.cart { width: 22px; height: 22px; margin: 2px 0 0 294px; flex: none; }
.content { flex: 1; min-height: 0; overflow: hidden; padding-left: 38px; }
.column { width: 1958px; height: 100%; border: solid #e9e9e9; border-width: 0 1px; padding-left: 145px; }
.specs { width: 1667px; border: solid #333; border-width: 0 2px; }
.row { height: 29.600px; display: grid; grid-template-columns: 831px 1fr; border-top: 1px solid #3a3a3a; align-items: stretch; line-height: 16px; }
.row:nth-child(even) { background: #e6e6e6; }
.stub { height: 8px; border-top: 0; }
.k, .v { display: flex; align-items: center; }
.k { font-weight: 700; font-size: 11.500px; padding-left: 20px; color: #111; }
.v { font-weight: 500; font-size: 11.400px; padding-left: 21px; border-left: 2px solid #111; color: #222; }
mark { background: #3e6fd9; color: #fff; }

.cookie { position: absolute; left: 0; right: 0; bottom: 0; height: 48px; padding: 0 0 1px 694px; background: #000; color: #c9a95a; display: flex; align-items: center; font-family: "Lato", sans-serif; font-size: 15px; letter-spacing: .115px; }
.accept { font-weight: 700; }
.cookie-x { margin-left: 19px; display: flex; }
.cookie-x svg { width: 10px; height: 10px; }
.a11y { position: absolute; left: 1979px; top: 1084px; width: 52px; height: 52px; }
.a11y svg { width: 52px; height: 52px; display: block; }
.scrollbar { width: 13px; flex: none; background: #f1f1f1; display: flex; flex-direction: column; align-items: center; padding: 4px 0 5px; }
.scrollbar > svg { width: 8px; height: 5px; flex: none; }
.track { flex: 1; width: 100%; padding: 193px 1.500px 0 1px; }
.thumb { height: 135px; background: #c1c1c1; }
```
